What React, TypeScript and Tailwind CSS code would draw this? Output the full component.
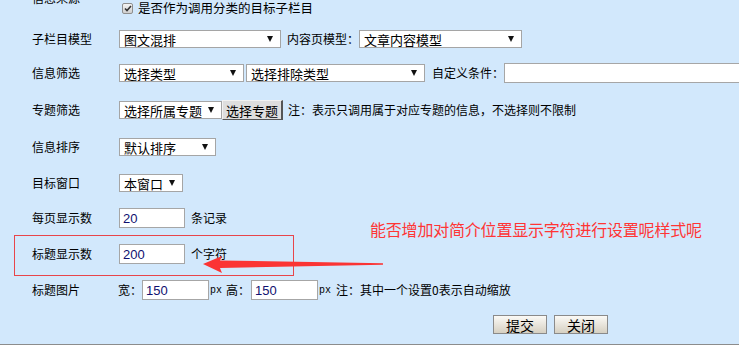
import React from "react";

const font = { fontFamily: '"Noto Sans CJK SC", "Liberation Sans", sans-serif' };

function Arrow() {
  return (
    <svg width="8" height="6" viewBox="0 0 8 6" className="shrink-0">
      <polygon points="1,0 7,0 4,6" fill="#111" />
    </svg>
  );
}

function Sel({ className, children }: { className: string; children: React.ReactNode }) {
  return (
    <div
      className={
        "h-[18px] bg-white border border-[#a5a5a5] flex items-center justify-between pl-[4px] pr-[6px] text-[13px] leading-none text-black shrink-0 whitespace-nowrap " +
        className
      }
    >
      <span>{children}</span>
      <Arrow />
    </div>
  );
}

function Field({ className, value }: { className: string; value?: string }) {
  return (
    <div
      className={
        "h-[20px] bg-white border border-[#a6a6a6] flex items-center pl-[3px] text-[13px] leading-none text-[#101070] shrink-0 " +
        className
      }
      style={{ fontFamily: '"Liberation Sans", sans-serif' }}
    >
      {value}
    </div>
  );
}

function Label({ children }: { children: React.ReactNode }) {
  return <div className="w-[87px] shrink-0 text-[12px] leading-none text-black whitespace-nowrap">{children}</div>;
}

export default function App() {
  return (
    <div className="relative w-[739px] h-[354px] overflow-hidden bg-[#d2e8fc]" style={font}>
      <div className="flex flex-col">
        {/* 信息来源 */}
        <div className="flex h-[15px] pl-[32px] items-start">
          <div className="-mt-[8px]">
            <Label>信息来源</Label>
          </div>
          <div className="flex items-center gap-[5px] mt-[2px] ml-[3px] text-[12px] leading-none whitespace-nowrap">
            <div className="w-[11px] h-[11px] border border-[#8f8f8f] rounded-[2px] bg-gradient-to-b from-[#f4f4f4] to-[#cfcfcf] flex items-center justify-center">
              <svg width="8" height="7" viewBox="0 0 8 7">
                <path d="M1 3.5 L3 5.5 L7 1" stroke="#333" strokeWidth="1.6" fill="none" />
              </svg>
            </div>
            <span className="text-[12.5px]">是否作为调用分类的目标子栏目</span>
          </div>
        </div>

        {/* 子栏目模型 */}
        <div className="flex items-center h-[20px] mt-[14px] pl-[32px] whitespace-nowrap">
          <Label>子栏目模型</Label>
          <Sel className="w-[162px]">图文混排</Sel>
          <span className="ml-[6px] text-[12px] shrink-0">内容页模型：</span>
          <Sel className="w-[163px]">文章内容模型</Sel>
        </div>

        {/* 信息筛选 */}
        <div className="flex items-center h-[20px] mt-[14px] pl-[32px] whitespace-nowrap">
          <Label>信息筛选</Label>
          <Sel className="w-[125px]">选择类型</Sel>
          <Sel className="w-[179px] ml-[2px]">选择排除类型</Sel>
          <span className="ml-[7px] text-[12px] shrink-0">自定义条件：</span>
          <Field className="w-[260px] h-[19px]" />
        </div>

        {/* 专题筛选 */}
        <div className="flex items-center h-[20px] mt-[17px] pl-[32px]">
          <Label>专题筛选</Label>
          <Sel className="w-[103px]">选择所属专题</Sel>
          <div className="w-[61px] h-[20px] bg-[#dedede] border-r-2 border-b border-[#555] border-t border-l border-t-[#f2f2f2] border-l-[#f2f2f2] flex items-center justify-center text-[13px] leading-none shrink-0 whitespace-nowrap">
            选择专题
          </div>
          <span className="ml-[5px] text-[12px] whitespace-nowrap">注：表示只调用属于对应专题的信息，不选择则不限制</span>
        </div>

        {/* 信息排序 */}
        <div className="flex items-center h-[20px] mt-[17px] pl-[32px]">
          <Label>信息排序</Label>
          <Sel className="w-[97px]">默认排序</Sel>
        </div>

        {/* 目标窗口 */}
        <div className="flex items-center h-[20px] mt-[16px] pl-[32px]">
          <Label>目标窗口</Label>
          <Sel className="w-[64px]">本窗口</Sel>
        </div>

        {/* 每页显示数 */}
        <div className="flex items-center h-[20px] mt-[15px] pl-[32px]">
          <Label>每页显示数</Label>
          <Field className="w-[66px]" value="20" />
          <span className="ml-[6px] text-[12px] whitespace-nowrap">条记录</span>
        </div>

        {/* 标题显示数 (框) */}
        <div className="ml-[14px] w-[280px] h-[41px] mt-[7px] border border-[#e8454a] pt-[8px] pl-[17px]">
          <div className="flex items-center h-[20px]">
            <Label>标题显示数</Label>
            <Field className="w-[66px]" value="200" />
            <span className="ml-[6px] text-[12px] whitespace-nowrap">个字符</span>
          </div>
        </div>

        {/* 标题图片 */}
        <div className="flex items-center h-[20px] mt-[4px] pl-[32px] text-[12px] whitespace-nowrap">
          <Label>标题图片</Label>
          <span className="-ml-[1px] w-[24px]">宽：</span>
          <Field className="w-[67px]" value="150" />
          <span className="text-[10px] ml-[1px] w-[16px]" style={{ fontFamily: '"Liberation Mono", monospace' }}>px</span>
          <span className="w-[25px]">高：</span>
          <Field className="w-[67px]" value="150" />
          <span className="text-[10px] ml-[1px] w-[17px]" style={{ fontFamily: '"Liberation Mono", monospace' }}>px</span>
          <span>注：其中一个设置0表示自动缩放</span>
        </div>

        {/* 按钮 */}
        <div className="flex h-[20px] mt-[14px] pl-[493px] gap-[7px] items-start pt-[1px]">
          <button className="w-[54px] h-[19px] border border-[#8a8a8a] bg-gradient-to-b from-[#fbfaf6] to-[#d6d0c2] text-[14px] leading-none text-black flex items-center justify-center">
            提交
          </button>
          <button className="w-[54px] h-[19px] border border-[#8a8a8a] bg-gradient-to-b from-[#fbfaf6] to-[#d6d0c2] text-[14px] leading-none text-black flex items-center justify-center">
            关闭
          </button>
        </div>

        <div className="mt-[10px] border-t border-[#8c8c8c] bg-white h-[20px]" />
      </div>

      {/* 批注 */}
      <div className="absolute left-[370px] top-[221px] text-[16px] leading-none text-[#ff3535] whitespace-nowrap tracking-[-0.2px]">
        能否增加对简介位置显示字符进行设置呢样式呢
      </div>
      <svg className="absolute left-0 top-0 pointer-events-none" width="739" height="354">
        <polygon
          points="203,264 222,256 220,260.5 383,263.3 383,264.7 220,268 222,273"
          fill="#fb3434"
        />
      </svg>
    </div>
  );
}
